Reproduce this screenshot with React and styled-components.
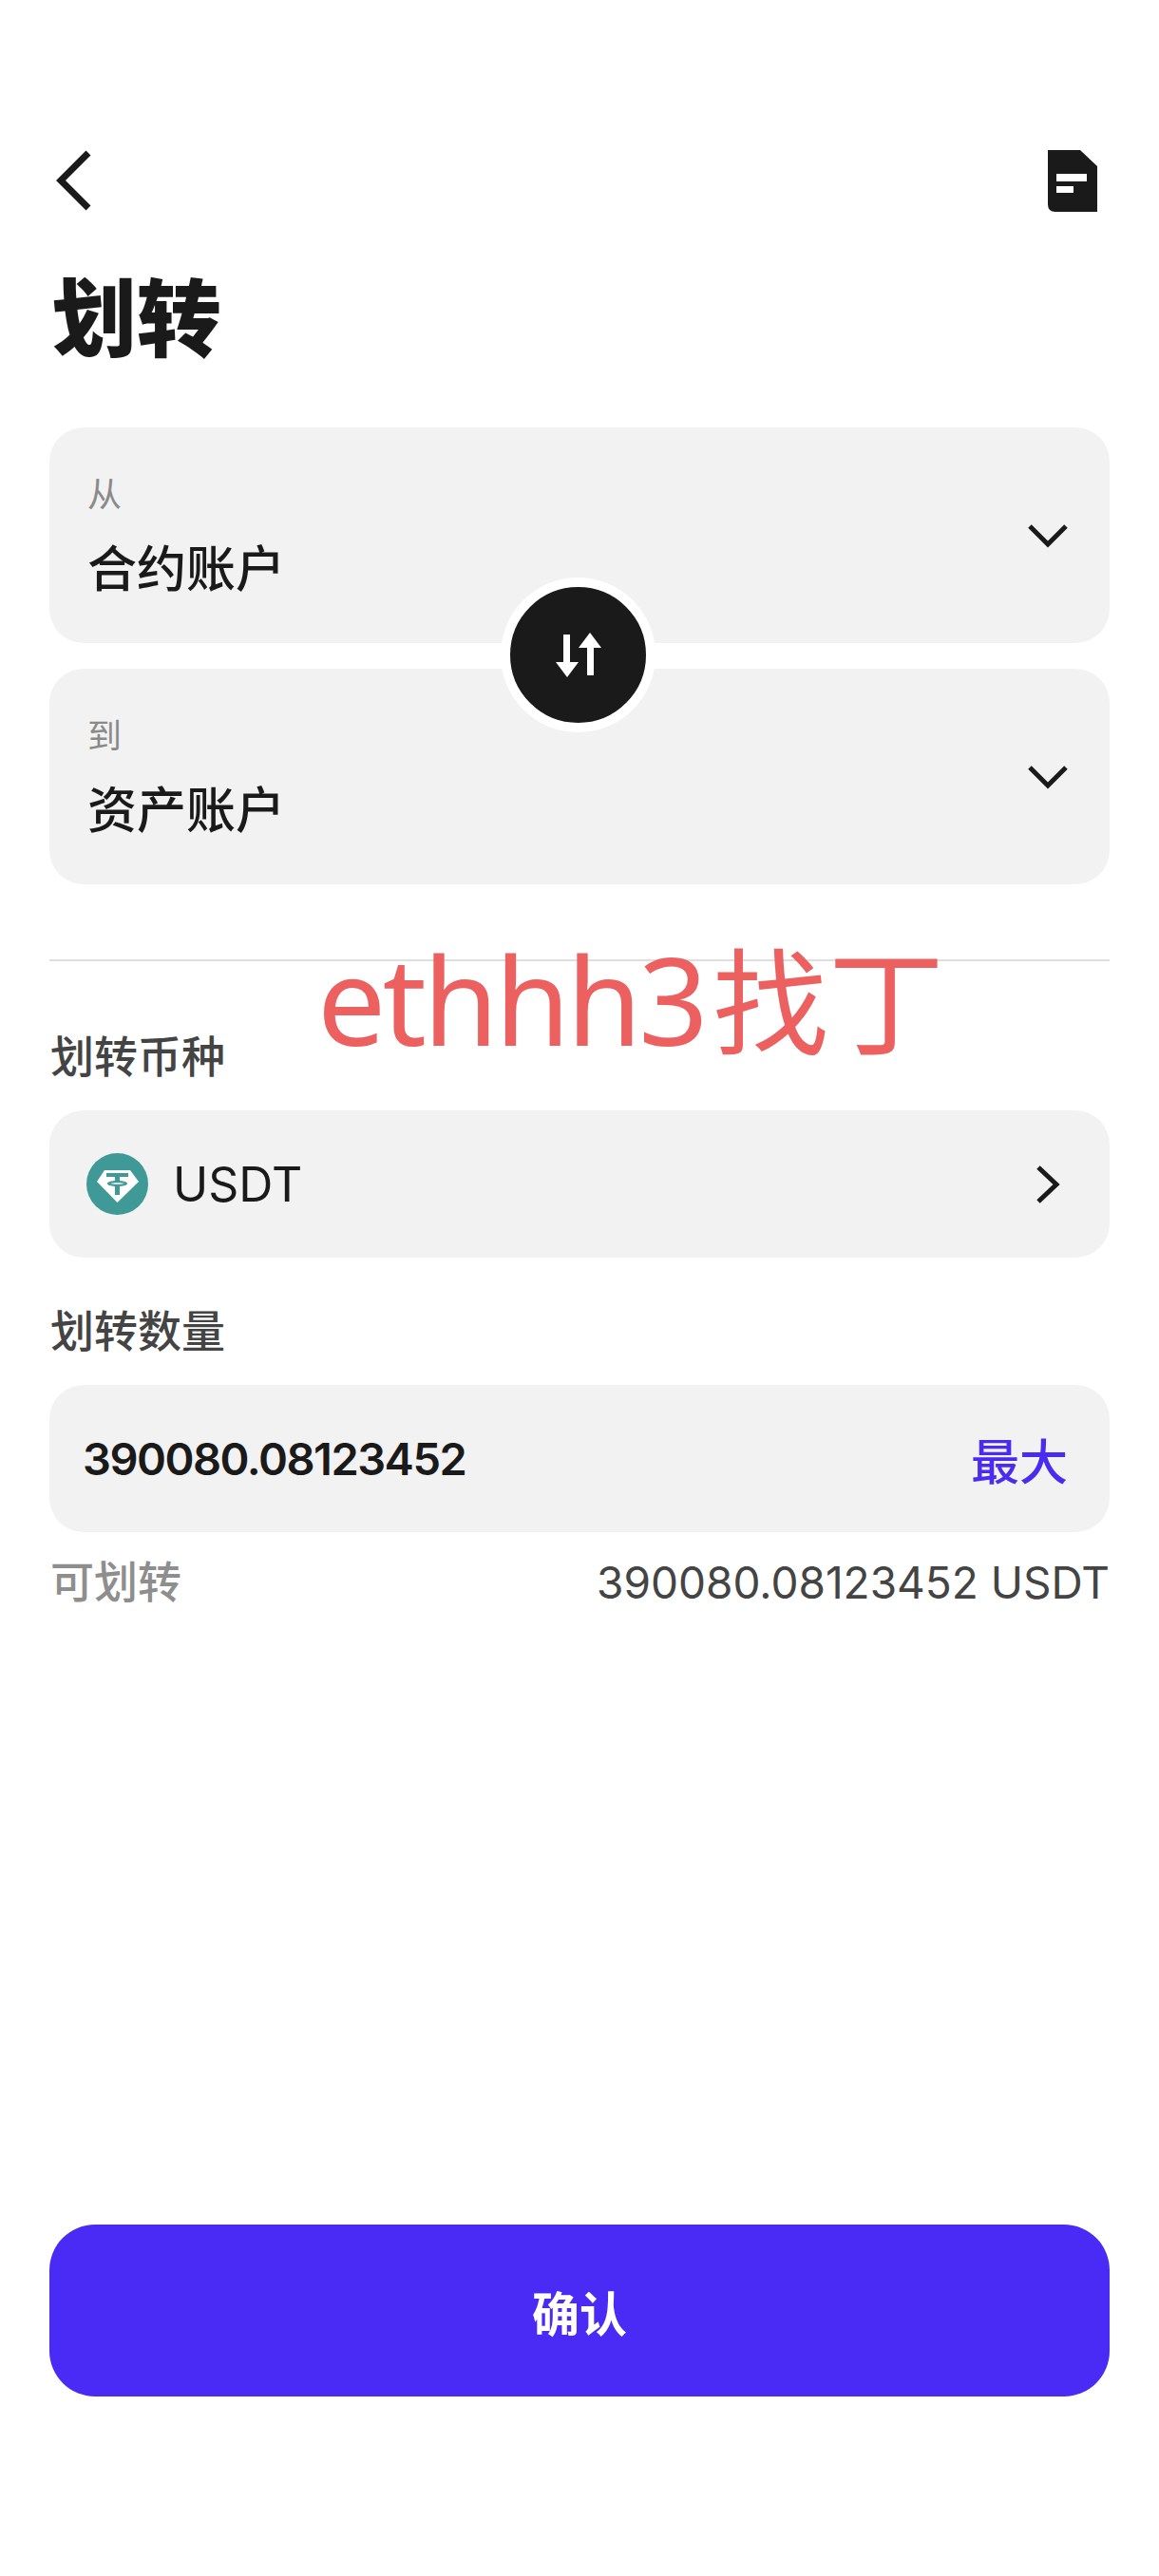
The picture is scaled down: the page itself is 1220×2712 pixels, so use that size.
import styled, {createGlobalStyle} from 'styled-components'

const Global = createGlobalStyle`
	html, body {
		margin: 0;
		padding: 0;
		background: #fff;
	}
	body {
		font-family: Inter, "Noto Sans CJK SC", sans-serif;
	}
`

const Page = styled.div`
	position: relative;
	width: 1220px;
	min-height: 2712px;
	box-sizing: border-box;
	padding: 150px 52px 189px;
	display: flex;
	flex-direction: column;
`

const Header = styled.header`
	height: 80px;
	display: flex;
	align-items: center;
	justify-content: space-between;
`

const BackIcon = styled.svg`
	width: 44px;
	height: 64px;
	margin-left: 6px;
`

const DocIcon = styled.svg`
	width: 52px;
	height: 65px;
	margin-right: 13px;
`

const Title = styled.h1`
	margin: 56px 0 0 3px;
	font-size: 89px;
	line-height: 100px;
	font-weight: 900;
	color: #1a1a1a;
`

const Accounts = styled.div`
	position: relative;
	margin-top: 64px;
	display: flex;
	flex-direction: column;
	gap: 27px;
`

const AccountCard = styled.div`
	height: 227px;
	box-sizing: border-box;
	padding: 0 44px 0 40px;
	background: #f2f2f2;
	border-radius: 36px;
	display: flex;
	align-items: center;
	justify-content: space-between;
`

const AccountText = styled.div`
	display: flex;
	flex-direction: column;
	gap: 19px;
	margin-top: -6px;
`

const AccountLabel = styled.div`
	font-size: 36px;
	line-height: 60px;
	color: #8a8a8a;
`

const AccountName = styled.div`
	font-size: 52px;
	line-height: 60px;
	font-weight: 500;
	color: #1a1a1a;
`

const SwapButton = styled.div`
	position: absolute;
	left: 475px;
	top: 158px;
	width: 143px;
	height: 143px;
	border: 10px solid #fff;
	border-radius: 50%;
	background: #1a1a1a;
	display: flex;
	align-items: center;
	justify-content: center;
`

const Divider = styled.div`
	margin-top: 79px;
	height: 2px;
	background: #dedede;
`

const Watermark = styled.div`
	position: absolute;
	left: 334px;
	top: 972px;
	font-family: "Noto Sans", "Noto Sans CJK SC", sans-serif;
	font-size: 128px;
	line-height: 160px;
	letter-spacing: -3.5px;
	color: #ec6060;
	white-space: nowrap;
`

const WatermarkCjk = styled.span`
	font-size: 122px;
	letter-spacing: 0;
	margin-left: 8px;
`

const FieldLabel = styled.div`
	margin: ${p => p.$top}px 0 0 1px;
	font-size: 46px;
	line-height: 60px;
	font-weight: 500;
	color: #444;
`

const FieldBox = styled.div`
	margin-top: 27px;
	height: 155px;
	box-sizing: border-box;
	padding: 0 ${p => p.$right}px 0 ${p => p.$left}px;
	background: #f2f2f2;
	border-radius: 36px;
	display: flex;
	align-items: center;
`

const CoinName = styled.span`
	margin-left: 26px;
	font-size: 50px;
	color: #1a1a1a;
	flex: 1;
`

const AmountValue = styled.span`
	flex: 1;
	font-size: 47px;
	font-weight: 600;
	letter-spacing: -1.5px;
	color: #1a1a1a;
`

const MaxLink = styled.span`
	font-size: 51px;
	font-weight: 500;
	color: #4a2bf0;
`

const Available = styled.div`
	margin-top: 22px;
	height: 60px;
	display: flex;
	align-items: center;
	justify-content: space-between;
`

const AvailableLabel = styled.span`
	margin: -6px 0 0 1px;
	font-size: 46px;
	font-weight: 500;
	color: #8e8e8e;
`

const AvailableValue = styled.span`
	margin-top: 2px;
	font-size: 46px;
	color: #444;
`

const Confirm = styled.button`
	margin-top: auto;
	height: 181px;
	border: 0;
	border-radius: 48px;
	background: #4a2af5;
	color: #fff;
	font-family: inherit;
	font-size: 50px;
	font-weight: 700;
`

const ChevronDown = () => (
	<svg width="42" height="26" viewBox="0 0 42 26" fill="none">
		<path d="M2 3 L21 22 L40 3" stroke="#1a1a1a" strokeWidth="5" />
	</svg>
)

const ChevronRight = () => (
	<svg width="26" height="40" viewBox="0 0 26 40" fill="none">
		<path d="M3 2 L22 20 L3 38" stroke="#1a1a1a" strokeWidth="5" />
	</svg>
)

const SwapIcon = () => (
	<svg width="48" height="47" viewBox="0 0 48 47" fill="#fff">
		<path d="M8 2 H15 V31 H24 L12 47 L0 31 H8 Z" />
		<path d="M33 45 H40 V16 H48 L36 0 L24 16 H33 Z" />
	</svg>
)

const UsdtIcon = () => (
	<svg width="65" height="65" viewBox="0 0 65 65">
		<circle cx="32.5" cy="32.5" r="32.5" fill="#3f9a97" />
		<path d="M19 18 H46 L55 30 L32.5 52 L11 30 Z" fill="#fff" />
		<path d="M21 21 H44 V25 H35 V29 C40 29.5 43 30.5 43 32 C43 33.5 40 34.5 35 35 V44 H30 V35 C25 34.5 22 33.5 22 32 C22 30.5 25 29.5 30 29 V25 H21 Z" fill="#3f9a97" />
		<path d="M25 32 C27 31 38 31 40 32 C38 33 27 33 25 32 Z" fill="#fff" />
	</svg>
)

export default function App() {
	return (
		<Page>
			<Global />
			<Header>
				<BackIcon viewBox="0 0 44 64" fill="none">
					<path d="M35 3 L6 32 L35 61" stroke="#1a1a1a" strokeWidth="7" />
				</BackIcon>
				<DocIcon viewBox="0 0 52 65">
					<path d="M0 0 H34 L52 17 V65 H8 Q0 65 0 57 Z" fill="#1a1a1a" />
					<rect x="9" y="25" width="32" height="8" fill="#fff" />
					<rect x="9" y="38" width="18" height="7" fill="#fff" />
				</DocIcon>
			</Header>

			<Title>划转</Title>

			<Accounts>
				<AccountCard>
					<AccountText>
						<AccountLabel>从</AccountLabel>
						<AccountName>合约账户</AccountName>
					</AccountText>
					<ChevronDown />
				</AccountCard>
				<AccountCard>
					<AccountText>
						<AccountLabel>到</AccountLabel>
						<AccountName>资产账户</AccountName>
					</AccountText>
					<ChevronDown />
				</AccountCard>
				<SwapButton>
					<SwapIcon />
				</SwapButton>
			</Accounts>

			<Divider />
			<Watermark>ethhh3<WatermarkCjk>找丁</WatermarkCjk></Watermark>

			<FieldLabel $top={70}>划转币种</FieldLabel>
			<FieldBox $left={39} $right={52}>
				<UsdtIcon />
				<CoinName>USDT</CoinName>
				<ChevronRight />
			</FieldBox>

			<FieldLabel $top={47}>划转数量</FieldLabel>
			<FieldBox $left={35} $right={44}>
				<AmountValue>390080.08123452</AmountValue>
				<MaxLink>最大</MaxLink>
			</FieldBox>

			<Available>
				<AvailableLabel>可划转</AvailableLabel>
				<AvailableValue>390080.08123452 USDT</AvailableValue>
			</Available>

			<Confirm>确认</Confirm>
		</Page>
	)
}
